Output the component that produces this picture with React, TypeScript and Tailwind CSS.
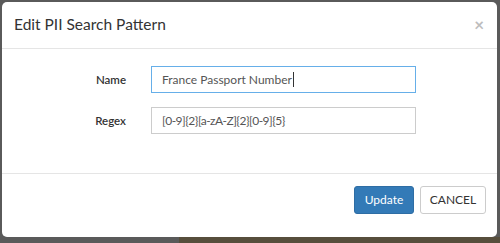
import React from "react";

export default function App() {
  const font = { fontFamily: 'Lato, "Open Sans", sans-serif' };
  return (
    <div className="w-[500px] h-[243px] bg-[#5a5a5a] relative overflow-hidden" style={font}>
      <div className="absolute left-[179px] right-0 bottom-0 h-[6px] bg-[#574e3c]" />
      <div className="absolute left-[2px] top-[2px] w-[495px] h-[235px] bg-white rounded-[5px] flex flex-col">
        <div className="h-[47px] border-b border-[#e5e5e5] flex items-center justify-between pl-[12px] pr-[12px]">
          <span className="text-[15.5px] text-[#333]">Edit PII Search Pattern</span>
          <span className="text-[#bdbdbd] text-[17px] font-bold leading-none mt-[-2px] mr-[1px]">×</span>
        </div>
        <div className="h-[125px] border-b border-[#e5e5e5] flex flex-col pt-[17px] gap-[14px]">
          <div className="flex items-center h-[27px]">
            <label className="w-[124px] text-right text-[11.5px] font-semibold text-[#333]">Name</label>
            <div className="ml-[25px] w-[265px] h-[27px] border border-[#66afe9] flex items-center pl-[10px] text-[12px] text-[#555]">
              France Passport Number<span className="inline-block w-px h-[15px] bg-[#333] ml-[1px]" />
            </div>
          </div>
          <div className="flex items-center h-[27px]">
            <label className="w-[124px] text-right text-[11.5px] font-semibold text-[#333]">Regex</label>
            <div className="ml-[25px] w-[265px] h-[27px] border border-[#ccc] flex items-center pl-[10px] text-[12px] text-[#555] tracking-[-0.5px]">
              {"[0-9]{2}[a-zA-Z]{2}[0-9]{5}"}
            </div>
          </div>
        </div>
        <div className="flex justify-end pt-[12px] pr-[11px] gap-[6px]">
          <button className="w-[60px] h-[28px] bg-[#337ab7] border border-[#2e6da4] rounded-[3px] text-white text-[12px]">Update</button>
          <button className="w-[66px] h-[28px] bg-white border border-[#ccc] rounded-[3px] text-[#333] text-[12px]">CANCEL</button>
        </div>
      </div>
    </div>
  );
}
